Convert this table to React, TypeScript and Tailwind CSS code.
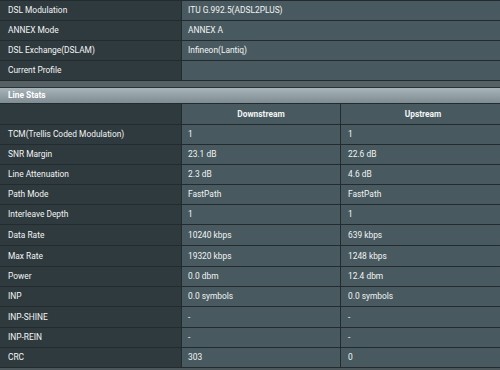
const profile = [
  { label: 'DSL Modulation', value: 'ITU G.992.5(ADSL2PLUS)' },
  { label: 'ANNEX Mode', value: 'ANNEX A' },
  { label: 'DSL Exchange(DSLAM)', value: 'Infineon(Lantiq)' },
  { label: 'Current Profile', value: '' },
];

// row heights follow the screenshot (a couple of rows are a pixel taller)
const stats = [
  { label: 'TCM(Trellis Coded Modulation)', down: '1', up: '1', h: 'h-[20px]' },
  { label: 'SNR Margin', down: '23.1 dB', up: '22.6 dB', h: 'h-[20px]' },
  { label: 'Line Attenuation', down: '2.3 dB', up: '4.6 dB', h: 'h-[20px]' },
  { label: 'Path Mode', down: 'FastPath', up: 'FastPath', h: 'h-[20px]' },
  { label: 'Interleave Depth', down: '1', up: '1', h: 'h-[20px]' },
  { label: 'Data Rate', down: '10240 kbps', up: '639 kbps', h: 'h-[21px]' },
  { label: 'Max Rate', down: '19320 kbps', up: '1248 kbps', h: 'h-[21px]' },
  { label: 'Power', down: '0.0 dbm', up: '12.4 dbm', h: 'h-[20px]' },
  { label: 'INP', down: '0.0 symbols', up: '0.0 symbols', h: 'h-[20px]' },
  { label: 'INP-SHINE', down: '-', up: '-', h: 'h-[21px]' },
  { label: 'INP-REIN', down: '-', up: '-', h: 'h-[20px]' },
  { label: 'CRC', down: '303', up: '0', h: 'h-[20px]' },
];

export default function App() {
  return (
    <div
      className="w-[500px] h-[370px] overflow-hidden bg-[#4c575b] text-[8.4px] text-[#f2f4f4]"
      style={{ fontFamily: 'Roboto, "Liberation Sans", sans-serif' }}
    >
      <div className="w-[505px] border-t border-[#232b2e]">
        {profile.map((row) => (
          <div key={row.label} className="flex h-[20px] border-b border-[#232b2e]">
            <div className="w-[182px] shrink-0 flex items-center pl-2 bg-[#2f3a3e] border-r border-[#232b2e]">
              {row.label}
            </div>
            <div className="flex-1 flex items-center pl-[6px] bg-[#485a5f]">{row.value}</div>
          </div>
        ))}
      </div>

      <div className="h-[7px] border-b border-[#2a3235] bg-[#566166]" />

      <div className="w-[505px]">
        <div className="h-[16px] flex items-center pl-2 font-bold text-white bg-gradient-to-b from-[#a7b4b9] to-[#7f8d93] border-b border-[#232b2e]">
          Line Stats
        </div>
        <div className="flex h-[21px] border-b border-[#232b2e] font-bold">
          <div className="w-[182px] shrink-0 bg-[#2f3a3e] border-r border-[#232b2e]" />
          <div className="w-[159px] shrink-0 flex items-center justify-center bg-[#485a5f] border-r border-[#232b2e]">
            Downstream
          </div>
          <div className="flex-1 flex items-center justify-center bg-[#485a5f]">Upstream</div>
        </div>
        {stats.map((row) => (
          <div key={row.label} className={`flex ${row.h} border-b border-[#232b2e]`}>
            <div className="w-[182px] shrink-0 flex items-center pl-2 bg-[#2f3a3e] border-r border-[#232b2e]">
              {row.label}
            </div>
            <div className="w-[159px] shrink-0 flex items-center pl-[6px] bg-[#485a5f] border-r border-[#232b2e]">
              {row.down}
            </div>
            <div className="flex-1 flex items-center pl-[7px] bg-[#485a5f]">{row.up}</div>
          </div>
        ))}
      </div>
    </div>
  );
}
